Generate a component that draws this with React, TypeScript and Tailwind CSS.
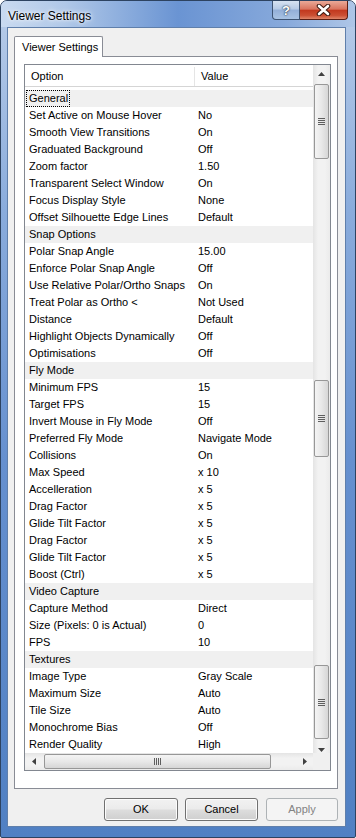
import React from 'react';

type Row = { label: string; value?: string; cat?: boolean; focus?: boolean };

const ROWS: Row[] = [
  { label: 'General', cat: true, focus: true },
  { label: 'Set Active on Mouse Hover', value: 'No' },
  { label: 'Smooth View Transitions', value: 'On' },
  { label: 'Graduated Background', value: 'Off' },
  { label: 'Zoom factor', value: '1.50' },
  { label: 'Transparent Select Window', value: 'On' },
  { label: 'Focus Display Style', value: 'None' },
  { label: 'Offset Silhouette Edge Lines', value: 'Default' },
  { label: 'Snap Options', cat: true },
  { label: 'Polar Snap Angle', value: '15.00' },
  { label: 'Enforce Polar Snap Angle', value: 'Off' },
  { label: 'Use Relative Polar/Ortho Snaps', value: 'On' },
  { label: 'Treat Polar as Ortho <', value: 'Not Used' },
  { label: 'Distance', value: 'Default' },
  { label: 'Highlight Objects Dynamically', value: 'Off' },
  { label: 'Optimisations', value: 'Off' },
  { label: 'Fly Mode', cat: true },
  { label: 'Minimum FPS', value: '15' },
  { label: 'Target FPS', value: '15' },
  { label: 'Invert Mouse in Fly Mode', value: 'Off' },
  { label: 'Preferred Fly Mode', value: 'Navigate Mode' },
  { label: 'Collisions', value: 'On' },
  { label: 'Max Speed', value: 'x 10' },
  { label: 'Accelleration', value: 'x 5' },
  { label: 'Drag Factor', value: 'x 5' },
  { label: 'Glide Tilt Factor', value: 'x 5' },
  { label: 'Drag Factor', value: 'x 5' },
  { label: 'Glide Tilt Factor', value: 'x 5' },
  { label: 'Boost (Ctrl)', value: 'x 5' },
  { label: 'Video Capture', cat: true },
  { label: 'Capture Method', value: 'Direct' },
  { label: 'Size (Pixels: 0 is Actual)', value: '0' },
  { label: 'FPS', value: '10' },
  { label: 'Textures', cat: true },
  { label: 'Image Type', value: 'Gray Scale' },
  { label: 'Maximum Size', value: 'Auto' },
  { label: 'Tile Size', value: 'Auto' },
  { label: 'Monochrome Bias', value: 'Off' },
  { label: 'Render Quality', value: 'High' },
];

function Arrow({ dir }: { dir: 'up' | 'down' | 'left' | 'right' }) {
  if (dir === 'up' || dir === 'down') {
    return (
      <svg width="7" height="4" viewBox="0 0 7 4">
        <polygon points={dir === 'up' ? '0,4 3.5,0 7,4' : '0,0 3.5,4 7,0'} fill="#404040" />
      </svg>
    );
  }
  return (
    <svg width="4" height="7" viewBox="0 0 4 7">
      <polygon points={dir === 'left' ? '4,0 0,3.5 4,7' : '0,0 4,3.5 0,7'} fill="#404040" />
    </svg>
  );
}

function GripV() {
  return (
    <div className="flex flex-col gap-[1px]">
      <div className="h-px w-[7px] bg-[#5e5e5e]" />
      <div className="h-px w-[7px] bg-[#5e5e5e]" />
      <div className="h-px w-[7px] bg-[#5e5e5e]" />
      <div className="h-px w-[7px] bg-[#5e5e5e]" />
    </div>
  );
}

function GripH() {
  return (
    <div className="flex gap-[1px]">
      <div className="w-px h-[7px] bg-[#5e5e5e]" />
      <div className="w-px h-[7px] bg-[#5e5e5e]" />
      <div className="w-px h-[7px] bg-[#5e5e5e]" />
      <div className="w-px h-[7px] bg-[#5e5e5e]" />
    </div>
  );
}

const vThumb =
  'mx-[1px] rounded-[2px] border border-[#979797] bg-[linear-gradient(90deg,#f4f4f4_0%,#e8e8e8_50%,#d6d6d6_100%)] flex items-center justify-center';

export default function App() {
  return (
    <div className="w-[356px] h-[838px] bg-white font-['Liberation_Sans',Arial,sans-serif] text-[11px] text-black">
      <div className="w-[356px] h-[838px] flex flex-col rounded-t-[7px] rounded-b-[2px] border border-[#2d4361] bg-[linear-gradient(180deg,#b9cde9_0%,#8aacdc_25%,#6690cf_55%,#5080c3_100%)] overflow-hidden">
        {/* title bar */}
        <div className="h-[28px] flex items-start bg-[linear-gradient(90deg,#c9daf0_0%,#b0c8e8_18%,#6a94d3_50%,#87a9db_80%,#aec6e7_100%)]">
          <div className="pl-[7px] pt-[8px] text-[12px] leading-[14px] [text-shadow:0_0_6px_#ffffff,0_0_3px_#ffffff]">
            Viewer Settings
          </div>
          <div className="ml-auto mr-[7px] flex">
            <div className="w-[28px] h-[19px] rounded-bl-[4px] border border-t-0 border-[#3d5372] bg-[linear-gradient(180deg,#d6e2f2_0%,#b6cae6_45%,#93afd8_50%,#a9c3e4_100%)] flex items-center justify-center text-[13px] font-bold text-white leading-none [text-shadow:0_0_1px_#1d2e45,0_0_2px_#1d2e45]">
              ?
            </div>
            <div className="w-[48px] h-[19px] rounded-br-[4px] border border-t-0 border-l-0 border-[#5a1e14] bg-[linear-gradient(180deg,#eaa998_0%,#d9745e_45%,#c2391f_52%,#cb4f33_80%,#df866a_100%)] flex items-center justify-center">
              <svg width="15" height="12" viewBox="0 0 15 12">
                <path d="M3 2 L12 10 M12 2 L3 10" stroke="#3b1810" strokeWidth="4.6" strokeLinecap="round" />
                <path d="M3 2 L12 10 M12 2 L3 10" stroke="#ffffff" strokeWidth="2.6" strokeLinecap="round" />
              </svg>
            </div>
          </div>
        </div>

        {/* client area */}
        <div className="flex-1 flex pl-[6px] pr-[9px] pb-[10px]">
          <div className="flex-1 flex flex-col border border-[#5f7fab] bg-[#f0f0f0]">
            {/* tab strip */}
            <div className="pt-[8px] pl-[6px] h-[28px] flex">
              <div className="relative z-10 h-[21px] w-[89px] pl-[7px] pt-[4px] border border-b-0 border-[#898c95] rounded-t-[2px] bg-white leading-[13px]">
                Viewer Settings
              </div>
            </div>

            {/* tab page */}
            <div className="ml-[6px] w-[324px] flex-1 flex border border-[#898c95] bg-white pt-[7px] pl-[9px] pr-[6px] pb-[17px]">
              <div className="flex-1 flex border border-[#828790] bg-white">
                {/* list column */}
                <div className="flex-1 min-w-0 flex flex-col">
                  <div className="h-[22px] flex border-b border-[#d5d5d5] bg-white pt-[2px]">
                    <div className="w-[170px] pl-[6px] flex items-center border-r border-[#e5e5e5]">Option</div>
                    <div className="pl-[6px] flex items-center">Value</div>
                  </div>
                  <div className="flex-1 overflow-hidden pt-[3px]">
                    {ROWS.map((r, i) => (
                      <div key={i} className={`h-[17px] flex items-center whitespace-nowrap ${r.cat ? 'bg-[#f0f0f0]' : ''}`}>
                        {r.focus ? (
                          <div className="ml-[1px] h-[17px] pl-[2px] pr-[1px] flex items-center border border-dotted border-black">
                            {r.label}
                          </div>
                        ) : (
                          <>
                            <div className="w-[170px] pl-[4px]">{r.label}</div>
                            {r.value && <div className="pl-[3px]">{r.value}</div>}
                          </>
                        )}
                      </div>
                    ))}
                  </div>
                  {/* horizontal scrollbar */}
                  <div className="h-[17px] flex bg-[linear-gradient(180deg,#e4e4e4_0%,#f2f2f2_30%,#f2f2f2_70%,#ebebeb_100%)]">
                    <div className="w-[17px] flex items-center justify-center">
                      <Arrow dir="left" />
                    </div>
                    <div className="ml-[2px] w-[227px] my-[1px] rounded-[2px] border border-[#979797] bg-[linear-gradient(180deg,#f4f4f4_0%,#e8e8e8_50%,#d6d6d6_100%)] flex items-center justify-center">
                      <GripH />
                    </div>
                    <div className="flex-1" />
                    <div className="w-[17px] flex items-center justify-center">
                      <Arrow dir="right" />
                    </div>
                  </div>
                </div>

                {/* vertical scrollbar */}
                <div className="w-[17px] flex flex-col">
                  <div className="flex-1 flex flex-col bg-[linear-gradient(90deg,#e4e4e4_0%,#f2f2f2_30%,#f2f2f2_70%,#ebebeb_100%)]">
                    <div className="h-[17px] flex items-center justify-center">
                      <Arrow dir="up" />
                    </div>
                    <div className={`mt-[2px] h-[75px] ${vThumb}`}>
                      <GripV />
                    </div>
                    <div className="h-[221px]" />
                    <div className={`h-[77px] ${vThumb}`}>
                      <GripV />
                    </div>
                    <div className="h-[208px]" />
                    <div className={`h-[74px] ${vThumb}`}>
                      <GripV />
                    </div>
                    <div className="flex-1 flex items-end justify-center pb-[1px]">
                      <Arrow dir="down" />
                    </div>
                  </div>
                  <div className="h-[17px] bg-[#f0f0f0]" />
                </div>
              </div>
            </div>

            {/* buttons */}
            <div className="mt-[9px] mb-[5px] h-[23px] flex justify-end pr-[7px]">
              <button className="w-[74px] h-[23px] rounded-[3px] border border-[#707070] bg-[linear-gradient(180deg,#f2f2f2_0%,#ebebeb_48%,#dddddd_52%,#cfcfcf_100%)] shadow-[inset_0_0_0_1px_#fcfcfc]">
                OK
              </button>
              <button className="ml-[7px] w-[73px] h-[23px] rounded-[3px] border border-[#707070] bg-[linear-gradient(180deg,#f2f2f2_0%,#ebebeb_48%,#dddddd_52%,#cfcfcf_100%)] shadow-[inset_0_0_0_1px_#fcfcfc]">
                Cancel
              </button>
              <button className="ml-[8px] w-[72px] h-[23px] rounded-[3px] border border-[#adb2b5] bg-[#f4f4f4] text-[#838383]">
                Apply
              </button>
            </div>
          </div>
        </div>
      </div>
    </div>
  );
}
